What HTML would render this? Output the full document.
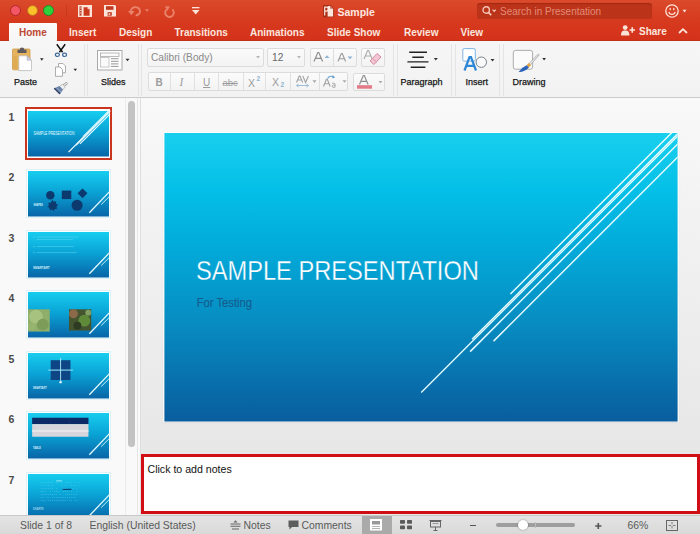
<!DOCTYPE html>
<html><head><meta charset="utf-8">
<style>
*{margin:0;padding:0;box-sizing:border-box}
html,body{width:700px;height:534px;overflow:hidden;background:#f4f4f4;font-family:"Liberation Sans",sans-serif;position:relative}
.a{position:absolute}
svg{position:absolute;overflow:visible}
#top{left:0;top:0;width:700px;height:41px;background:linear-gradient(#da4a2b,#d63a1f 50%,#d4321a)}
.tl{width:11px;height:11px;border-radius:50%;top:5px}
.tab{top:27px;font-size:10px;line-height:12px;color:#fbe6df;font-weight:bold;white-space:nowrap}
#home{left:9px;top:23px;width:48px;height:18px;background:linear-gradient(#fbfbfb,#f6f6f6);border-radius:1px 1px 0 0}
#ribbon{left:0;top:41px;width:700px;height:57px;background:linear-gradient(#f6f6f6,#f2f2f2)}
#rb{left:0;top:97px;width:700px;height:1px;background:#cbcbcb}
.sep{top:43.5px;height:52px;border-left:1px solid #e4e4e4;border-right:1px solid #e4e4e4}
.lbl{font-size:9px;line-height:10px;color:#151515;top:76.8px;white-space:nowrap;-webkit-text-stroke:0.25px #151515}
.box{background:linear-gradient(#fbfbfb,#f3f3f3);border:1px solid #dcdcdc;border-radius:2px}
#left{left:0;top:98px;width:141px;height:417px;background:#f9f9f9}
#main{left:141px;top:98px;width:559px;height:417px;background:linear-gradient(#f9f9f9 0%,#f3f3f3 25%,#ececec 60%,#e7e7e7 85%,#e9e9e6 100%)}
#status{left:0;top:515px;width:700px;height:19px;background:linear-gradient(#e4e4e4,#d9d9d9);border-top:1px solid #c8c8c8}
.st{top:4px;font-size:10.4px;line-height:11px;color:#5a5a5a;white-space:nowrap}
.num{left:8.5px;font-size:10.5px;line-height:12px;font-weight:bold;color:#4a4a4a}
.th{left:27px;width:83px;height:47px;border:1px solid #d6ebf3;background:#fff}
.th svg{left:0;top:0}
#slide{left:164px;top:132.5px;width:514px;height:288.5px;box-shadow:0 0 0 1px rgba(255,255,255,.7),0 1px 3px rgba(0,0,0,.08)}
#notes{left:141px;top:453.5px;width:559px;height:60.5px;background:#fff;border:3px solid #d10d16}
</style></head><body>
<div id="top" class="a">
  <div class="a" style="left:0;top:40px;width:700px;height:1px;background:#bf3419"></div>
  <div class="a tl" style="left:10px;top:5.2px;background:#f25763;border:1px solid #b3262a"></div>
  <div class="a tl" style="left:26.5px;top:5.2px;background:#f9c12a;border:1px solid #c0701d"></div>
  <div class="a tl" style="left:42.5px;top:5.2px;background:#2fd23a;border:1px solid #24862a"></div>
  <div class="a" style="left:66px;top:5px;width:1px;height:12px;background:#c8391c"></div>
  <!-- sidebar icon -->
  <svg style="left:77.5px;top:4.5px" width="14" height="12" viewBox="0 0 14 12">
    <rect x="0" y="0" width="14" height="12" fill="#fde4da"/>
    <rect x="1.5" y="1.3" width="2" height="9.4" fill="#b8402a"/>
    <path d="M1.8 3h1.4M1.8 5.5h1.4M1.8 8h1.4" stroke="#fde4da" stroke-width="0.8"/>
    <path d="M5.6 2.2h4l2 2v6.5h-6z" fill="#c9381c"/>
    <path d="M9.6 2.2v2h2z" fill="#fde4da"/>
  </svg>
  <!-- save icon -->
  <svg style="left:104px;top:5px" width="12" height="11.5" viewBox="0 0 12 11.5">
    <path d="M0 0h11l1 1v10.5h-12z" fill="#fde4da"/>
    <rect x="2" y="1.2" width="7.5" height="3.6" fill="#c0391f"/>
    <path d="M3.6 10.7v-3.5h4.2v3.5" fill="#c0391f"/>
    <rect x="4.6" y="8.3" width="1.6" height="1.6" fill="#fde4da"/>
  </svg>
  <!-- undo -->
  <svg style="left:128px;top:6px" width="24" height="10" viewBox="0 0 24 10">
    <path d="M3 6.5a4.6 4.2 0 1 1 4.6 3" fill="none" stroke="#e9826a" stroke-width="1.9"/>
    <path d="M0 5l3.3 4.2l3.2-4.2z" fill="#e9826a"/>
    <path d="M17 3.3h4l-2 2.5z" fill="#e9826a"/>
  </svg>
  <!-- redo -->
  <svg style="left:163.5px;top:5px" width="12" height="12" viewBox="0 0 12 12">
    <path d="M8.3 4.4a4.3 4.3 0 1 1 -5.7 0.1" fill="none" stroke="#e9826a" stroke-width="1.9"/>
    <path d="M0.8 1.2l5.2 0.4l-2.6 4.2z" fill="#e9826a"/>
  </svg>
  <!-- customize -->
  <svg style="left:191.5px;top:6.5px" width="8" height="8" viewBox="0 0 8 8">
    <rect x="0" y="0" width="7.5" height="1.3" fill="#fde4da"/>
    <path d="M0 3h7.5l-3.75 4.5z" fill="#fde4da"/>
  </svg>
  <!-- ppt doc icon -->
  <svg style="left:322.5px;top:4.5px" width="11" height="12.5" viewBox="0 0 11 12.5">
    <path d="M0 0H7.6L11 3.4V12.3H0Z" fill="#a82d17"/>
    <path d="M4.6 0.9H7.2L10.1 3.8V11.4H4.6Z" fill="#fde6dd"/>
    <path d="M7.2 0.9V3.8H10.1Z" fill="#c4664e"/>
    <path d="M1.7 10.6V2.1H3.4a2 2 0 0 1 0 4H1.7" fill="none" stroke="#fde6dd" stroke-width="1.2"/>
  </svg>
  <div class="a" style="left:337.5px;top:5.5px;font-size:10.5px;line-height:13px;color:#fde9e1;font-weight:bold">Sample</div>
  <div class="a" style="left:477px;top:3px;width:175px;height:15.5px;background:#bb3319;border-radius:3px;box-shadow:inset 0 1px 1px rgba(120,20,0,.35)"></div>
  <svg style="left:481.5px;top:6px" width="15" height="10" viewBox="0 0 15 10">
    <circle cx="4.2" cy="4" r="3.2" fill="none" stroke="#f6c4b6" stroke-width="1.4"/>
    <path d="M6.4 6.3l2.8 2.8" stroke="#f6c4b6" stroke-width="1.7"/>
    <path d="M10.6 3.6l1.6 1.8l1.6-1.8" fill="none" stroke="#f6c4b6" stroke-width="1.2"/>
  </svg>
  <div class="a" style="left:500px;top:6px;font-size:10px;line-height:12px;color:#e48b78">Search in Presentation</div>
  <!-- smiley -->
  <svg style="left:665px;top:4px" width="24" height="14" viewBox="0 0 24 14">
    <circle cx="7" cy="7" r="6.2" fill="none" stroke="#fde2d8" stroke-width="1.3"/>
    <rect x="4.6" y="4" width="1.2" height="2.2" fill="#fde2d8"/>
    <rect x="8.2" y="4" width="1.2" height="2.2" fill="#fde2d8"/>
    <path d="M3.8 7.8a3.3 3.3 0 0 0 6.4 0" fill="none" stroke="#fde2d8" stroke-width="1.2"/>
    <path d="M17.5 5.8h4l-2 2.6z" fill="#fde2d8"/>
  </svg>
  <!-- share -->
  <svg style="left:621px;top:25px" width="15" height="11" viewBox="0 0 15 11">
    <circle cx="4.2" cy="2.6" r="2.4" fill="#fde2d8"/>
    <path d="M0 10.5c0-4 1.5-5 4.2-5s4.2 1 4.2 5z" fill="#fde2d8"/>
    <path d="M8.5 5h5.5M11.25 2.2v5.6" stroke="#fde2d8" stroke-width="1.6"/>
  </svg>
  <svg style="left:677.5px;top:28px" width="10" height="6" viewBox="0 0 10 6">
    <path d="M1 5l4-3.8l4 3.8" fill="none" stroke="#fde2d8" stroke-width="1.8"/>
  </svg>
</div>
<div id="home" class="a"></div>
<div class="a tab" style="left:19px;color:#bd4833">Home</div>
<div class="a tab" style="left:69px">Insert</div>
<div class="a tab" style="left:119px">Design</div>
<div class="a tab" style="left:174.5px">Transitions</div>
<div class="a tab" style="left:250px">Animations</div>
<div class="a tab" style="left:327px">Slide Show</div>
<div class="a tab" style="left:404px">Review</div>
<div class="a tab" style="left:460.5px">View</div>
<div class="a tab" style="left:639px;top:26px">Share</div>

<div id="ribbon" class="a"></div>
<div id="rb" class="a"></div>
<div class="a sep" style="left:84px;width:4px"></div>
<div class="a sep" style="left:138px;width:4px"></div>
<div class="a sep" style="left:392.5px;width:5px"></div>
<div class="a sep" style="left:451px;width:4.5px"></div>
<div class="a sep" style="left:499px;width:5px"></div>

<!-- paste -->
<svg style="left:12px;top:46px" width="33" height="26" viewBox="0 0 33 26">
  <rect x="0.5" y="3" width="17.5" height="20.8" rx="1" fill="#e5b45c" stroke="#cf9c4c" stroke-width="0.8"/>
  <rect x="1.3" y="10" width="4" height="13" fill="#d9a54d" opacity=".6"/>
  <path d="M5.5 7v-3.2h2.2a2.3 2.3 0 0 1 4.6 0h2.2v3.2z" fill="#5e5a5e"/>
  <path d="M6.8 9.8h8.2l4.5 4.5v10.3h-12.7z" fill="#fff" stroke="#bdbdbd" stroke-width="0.8"/>
  <path d="M15 9.8v4.5h4.5z" fill="#c9cede" stroke="#aab" stroke-width="0.5"/>
  <path d="M28 12.3h3.6l-1.8 2.4z" fill="#2a2a2a"/>
</svg>
<div class="a lbl" style="left:14px">Paste</div>
<!-- scissors -->
<svg style="left:54px;top:44px" width="14" height="14" viewBox="0 0 14 14">
  <path d="M2.8 0.3L8.6 8.3M11.2 0.3L5.4 8.3" stroke="#111" stroke-width="1.5"/>
  <ellipse cx="3.4" cy="10.8" rx="2" ry="1.7" fill="none" stroke="#3f6a9a" stroke-width="1.2"/>
  <ellipse cx="10.6" cy="10.8" rx="2" ry="1.7" fill="none" stroke="#3f6a9a" stroke-width="1.2"/>
</svg>
<!-- copy -->
<svg style="left:55px;top:62.5px" width="24" height="14" viewBox="0 0 24 14">
  <path d="M3.5 0.5h4.5l2.5 2.5v6.8h-7z" fill="#fff" stroke="#9a9a9a" stroke-width="0.8"/>
  <path d="M0.5 4h4.5l2.5 2.5v6.8h-7z" fill="#fff" stroke="#9a9a9a" stroke-width="0.8"/>
  <path d="M18.5 5.8h3.6l-1.8 2.3z" fill="#2a2a2a"/>
</svg>
<!-- format painter -->
<svg style="left:54px;top:82px" width="14" height="12" viewBox="0 0 14 12">
  <path d="M9.8 3.6L12.3 1.4" stroke="#9a9a9a" stroke-width="2.6" stroke-linecap="round"/>
  <path d="M9.8 3.6L12.3 1.4" stroke="#f4f4f4" stroke-width="1.1" stroke-linecap="round"/>
  <path d="M5.6 4.3L8.3 2l3 3l-2.5 2.6z" fill="#f0f0f0" stroke="#a0a0a0" stroke-width="0.6"/>
  <path d="M0.2 6.3L5.4 4l3.6 3.8l-3 4.2z" fill="#6b83aa"/>
  <path d="M0.2 6.3L6 12" stroke="#2f3f5f" stroke-width="1.2"/>
  <path d="M2.5 5.5l4.5 4.5" stroke="#a9b9d3" stroke-width="0.7"/>
</svg>
<!-- slides icon -->
<svg style="left:97px;top:49.5px" width="34" height="21" viewBox="0 0 34 21">
  <rect x="0.5" y="0.5" width="24.5" height="19.5" fill="#fdfdfd" stroke="#a9a9a9" stroke-width="1"/>
  <rect x="3.5" y="3" width="18.5" height="3.5" fill="#fafafa" stroke="#aaa" stroke-width="0.8"/>
  <rect x="3.5" y="7.5" width="8.5" height="9.5" fill="#fafafa" stroke="#bbb" stroke-width="0.8"/>
  <path d="M14 8.7h7.5M14 11.3h7.5M14 13.9h7.5M14 16.4h7.5" stroke="#8d8d8d" stroke-width="0.9"/>
  <path d="M28.5 8.7h4l-2 2.6z" fill="#333"/>
</svg>
<div class="a lbl" style="left:101px">Slides</div>

<!-- font name -->
<div class="a box" style="left:147px;top:47.5px;width:116.5px;height:19px"></div>
<div class="a" style="left:151px;top:52px;font-size:10.2px;line-height:12px;color:#8a8a8a">Calibri (Body)</div>
<svg style="left:256px;top:56px" width="5" height="3" viewBox="0 0 5 3"><path d="M0 0h4l-2 2.5z" fill="#b5b5b5"/></svg>
<div class="a box" style="left:266.5px;top:48px;width:38.5px;height:18.5px"></div>
<div class="a" style="left:272px;top:52px;font-size:10.2px;line-height:12px;color:#666">12</div>
<svg style="left:297px;top:56px" width="5" height="3" viewBox="0 0 5 3"><path d="M0 0h4l-2 2.5z" fill="#b5b5b5"/></svg>
<div class="a box" style="left:309.5px;top:48px;width:47px;height:18.5px"></div>
<div class="a" style="left:333px;top:49px;width:1px;height:16.5px;background:#dedede"></div>
<svg style="left:313px;top:52px" width="42" height="10" viewBox="0 0 42 10">
  <path d="M1 9.5l3.8-9h1l3.8 9M2.6 6.3h5.6" fill="none" stroke="#8f8f8f" stroke-width="1.2"/>
  <path d="M11.5 6h5l-2.5-2.8z" fill="#8fb4d2"/>
  <path d="M25 9.5l3.3-8h1l3.3 8M26.4 6.7h4.8" fill="none" stroke="#9a9a9a" stroke-width="1.1"/>
  <path d="M34.5 4.5h5l-2.5 2.8z" fill="#8fb4d2"/>
</svg>
<div class="a box" style="left:360.5px;top:48px;width:24px;height:18.5px"></div>
<svg style="left:363px;top:50px" width="20" height="15" viewBox="0 0 20 15">
  <path d="M1 9l3.6-8.5h1l3.6 8.5M2.5 6h5.4" fill="none" stroke="#aaa" stroke-width="1.1"/>
  <path d="M7 11l7-7.5l4 3.5l-7 7.5z" fill="#f2c6d2" stroke="#d98aa3" stroke-width="1"/>
  <path d="M9.5 8.5l4 3.5" stroke="#d98aa3" stroke-width="0.8"/>
</svg>

<!-- row 2 -->
<div class="a box" style="left:147.5px;top:72px;width:200.5px;height:19px"></div>
<div class="a" style="left:170.3px;top:73px;width:1px;height:17px;background:#e0e0e0"></div>
<div class="a" style="left:194.3px;top:73px;width:1px;height:17px;background:#e0e0e0"></div>
<div class="a" style="left:218.2px;top:73px;width:1px;height:17px;background:#e0e0e0"></div>
<div class="a" style="left:242.6px;top:73px;width:1px;height:17px;background:#e0e0e0"></div>
<div class="a" style="left:265.1px;top:73px;width:1px;height:17px;background:#e0e0e0"></div>
<div class="a" style="left:289.5px;top:73px;width:1px;height:17px;background:#e0e0e0"></div>
<div class="a" style="left:319.3px;top:73px;width:1px;height:17px;background:#e0e0e0"></div>
<div class="a" style="left:155.5px;top:76.5px;font-size:10px;line-height:11px;font-weight:bold;color:#9c9c9c">B</div>
<div class="a" style="left:179.5px;top:75.5px;font-size:11.5px;line-height:12px;font-style:italic;color:#a0a0a0;font-family:'Liberation Serif',serif">I</div>
<div class="a" style="left:203px;top:76.5px;font-size:10px;line-height:11px;color:#9c9c9c;text-decoration:underline">U</div>
<div class="a" style="left:222.5px;top:77px;font-size:9.5px;line-height:11px;color:#9c9c9c;text-decoration:line-through">abc</div>
<div class="a" style="left:248px;top:78px;font-size:10.5px;line-height:11px;color:#9c9c9c">X</div>
<div class="a" style="left:256.5px;top:75px;font-size:6.5px;line-height:7px;color:#8fb4d2;font-weight:bold">2</div>
<div class="a" style="left:272px;top:76.5px;font-size:10.5px;line-height:11px;color:#9c9c9c">X</div>
<div class="a" style="left:280.5px;top:80.5px;font-size:6.5px;line-height:7px;color:#8fb4d2;font-weight:bold">2</div>
<svg style="left:296px;top:75px" width="25" height="15" viewBox="0 0 25 15">
  <path d="M0.5 7.5l2.7-6.5h.8l2.7 6.5M1.5 5h4.5" fill="none" stroke="#a4a4a4" stroke-width="1.1"/>
  <path d="M6.8 1l2.8 6.5l2.8-6.5" fill="none" stroke="#a4a4a4" stroke-width="1.1"/>
  <path d="M0.5 10.5h12M0.5 10.5l2-1.5M0.5 10.5l2 1.5M12.5 10.5l-2-1.5M12.5 10.5l-2 1.5" stroke="#94b6d2" stroke-width="0.9" fill="none"/>
  <path d="M16.5 5.3h4l-2 2.6z" fill="#aaa"/>
</svg>
<svg style="left:323px;top:74px" width="25" height="16" viewBox="0 0 25 16">
  <path d="M0.5 12.5l2.9-7.3h.9l2.9 7.3M1.6 9.8h4.9" fill="none" stroke="#a0a0a0" stroke-width="1.1"/>
  <path d="M9 9.3h1.8a1.3 1.3 0 0 1 1.3 1.3v2.2M12.1 11.2h-1.7a1.1 1.1 0 1 0 0 2.2h1.7" fill="none" stroke="#a0a0a0" stroke-width="0.9"/>
  <path d="M4.5 4.5c1.5-2.6 4.5-3 6.3-1.2" fill="none" stroke="#6a9fce" stroke-width="1.1"/>
  <path d="M9.8 1l2.3 2.6l-2.9 0.8z" fill="#6a9fce"/>
  <path d="M19.5 6.2h4l-2 2.6z" fill="#aaa"/>
</svg>
<div class="a box" style="left:352.5px;top:72.5px;width:32px;height:18.5px"></div>
<svg style="left:356px;top:75px" width="28" height="15" viewBox="0 0 28 15">
  <path d="M3.5 9.5l3.8-9h1l3.8 9M5.1 6.3h5.6" fill="none" stroke="#8f8f8f" stroke-width="1.2"/>
  <rect x="1" y="10.2" width="15" height="3.5" fill="#e27a87"/>
  <path d="M22.5 6h4l-2 2.6z" fill="#aaa"/>
</svg>

<!-- paragraph -->
<svg style="left:405px;top:50px" width="36" height="19" viewBox="0 0 36 19">
  <path d="M4.2 2.2h17.8M7.3 7.2h11.5M2.4 11.9h21.1M5.7 17.2h14.7" stroke="#222" stroke-width="1.4"/>
  <path d="M28.8 8h4l-2 2.6z" fill="#333"/>
</svg>
<div class="a lbl" style="left:400.5px">Paragraph</div>
<!-- insert -->
<svg style="left:461.5px;top:48px" width="34" height="24" viewBox="0 0 34 24">
  <rect x="0.8" y="0.6" width="12.5" height="12.5" rx="1.5" fill="#fff" stroke="#7fb4e3" stroke-width="1"/>
  <circle cx="19.3" cy="14.2" r="5.2" fill="#fafafa" stroke="#6b7480" stroke-width="0.9"/>
  <path d="M2.5 22.5l5-13.5h1.5l5 13.5M4.3 17.8h8" fill="none" stroke="#2e86d6" stroke-width="2.2"/>
  <path d="M28.5 11h4l-2 2.6z" fill="#333"/>
</svg>
<div class="a lbl" style="left:465.5px">Insert</div>
<!-- drawing -->
<svg style="left:512px;top:50px" width="36" height="23" viewBox="0 0 36 23">
  <rect x="1.3" y="0.4" width="19.3" height="18.8" rx="2.3" fill="#fbfbfb" stroke="#a3a3a3" stroke-width="0.9"/>
  <path d="M26.36 3.99L27.24 4.81L18.54 14.88L17.06 13.52Z" fill="#ececec" stroke="#8a8a8a" stroke-width="0.6" stroke-linejoin="round"/>
  <path d="M18.98 15.28L16.62 13.12L14.59 15.33L16.95 17.49Z" fill="#e6a23e"/>
  <path d="M16.95 17.49L14.59 15.33Q10.5 17 6.6 21.9Q12.3 22.3 16.95 17.49Z" fill="#2b63b9"/>
  <path d="M30.3 8h3.6l-1.8 2.5z" fill="#2a2a2a"/>
</svg>
<div class="a lbl" style="left:512.5px">Drawing</div>

<div id="left" class="a"></div>
<div class="a" style="left:124.5px;top:98px;width:1px;height:417px;background:#ececec"></div>
<div class="a" style="left:127.5px;top:101px;width:7px;height:346px;border-radius:3.5px;background:#c3c3c3"></div>
<div class="a" style="left:136.5px;top:98px;width:1px;height:417px;background:#e6e6e6"></div>
<div class="a" style="left:140px;top:98px;width:1px;height:417px;background:#dedede"></div>
<div id="main" class="a"></div>

<!-- thumbnails -->
<svg width="0" height="0" style="position:absolute">
  <defs>
    <linearGradient id="tg" x1="0" y1="0" x2="0" y2="1">
      <stop offset="0" stop-color="#17cdef"/>
      <stop offset=".45" stop-color="#0aa4d6"/>
      <stop offset="1" stop-color="#0865a7"/>
    </linearGradient>
    <g id="tl1" stroke="#f4fdff" fill="none">
      <path d="M41 41.6L83 -0.4" stroke-width="1.2"/>
      <path d="M48.6 35L83 0.6" stroke-width="1"/>
      <path d="M49.6 33L83 -0.4" stroke-width="1"/>
      <path d="M52.6 33.3L83 2.9" stroke-width="1.1"/>
      <path d="M55.3 25.7L83 -2" stroke-width="0.8" opacity=".85"/>
    </g>
    <g id="tl" stroke="#e4faff" fill="none">
      <path d="M62.1 42.2L83 20.4" stroke-width="1.3"/>
      <path d="M74.1 33.9L83 25.1" stroke-width="0.9"/>
    </g>
  </defs>
</svg>
<div class="a num" style="top:110.8px">1</div>
<div class="a" style="left:25px;top:107px;width:87px;height:53px;border:2.8px solid #ca3520;background:#fff"></div>
<svg style="left:28px;top:110.5px" width="81" height="45.5" viewBox="0 0 82 46" preserveAspectRatio="none">
  <rect width="82" height="46" fill="url(#tg)"/>
  <use href="#tl1"/>
  <text x="5.5" y="24.2" font-size="5" fill="#f0fbff" font-family="Liberation Sans" textLength="41.5" lengthAdjust="spacingAndGlyphs">SAMPLE PRESENTATION</text>
</svg>
<div class="a num" style="top:171.3px">2</div>
<div class="a" style="left:26px;top:169.2px;width:85px;height:49px;border:1.5px solid #ddf1f8;background:#fff"></div>
<svg style="left:28px;top:171px" width="81" height="45.5" viewBox="0 0 82 46" preserveAspectRatio="none">
  <rect width="82" height="46" fill="url(#tg)"/>
  <use href="#tl"/>
  <g fill="#0d3a6e">
    <circle cx="22.6" cy="24.4" r="4.3"/>
    <rect x="34.2" y="19.8" width="9.6" height="8.6"/>
    <path d="M55.2 17.6l5 5l-5 5l-5-5z"/>
    <path d="M24.7 29l1.3 2.2l2.4-0.6l0 2.4l2.2 1.2l-1.8 1.7l0.8 2.3l-2.5 0.2l-1 2.3l-1.7-1.8l-2.4 0.8l-0.2-2.5l-2.3-1l1.8-1.7l-0.8-2.3l2.5-0.2z"/>
    <circle cx="49.7" cy="34.6" r="5.6"/>
  </g>
  <text x="5.5" y="35.5" font-size="3" font-weight="bold" fill="#d8f4ff" font-family="Liberation Sans" textLength="9.5" lengthAdjust="spacingAndGlyphs">SHAPES</text>
</svg>
<div class="a num" style="top:231.8px">3</div>
<div class="a" style="left:26px;top:229.7px;width:85px;height:49px;border:1.5px solid #ddf1f8;background:#fff"></div>
<svg style="left:28px;top:231.5px" width="81" height="45.5" viewBox="0 0 82 46" preserveAspectRatio="none">
  <rect width="82" height="46" fill="url(#tg)"/>
  <use href="#tl"/>
  <g fill="#5fd6f2" opacity=".5">
    <path d="M6 4l1.1 1.1l-1.1 1.1l-1.1-1.1z"/><rect x="8.5" y="4.5" width="43" height="1"/><rect x="8.5" y="7" width="37" height="1"/>
    <path d="M6 13.7l1.1 1.1l-1.1 1.1l-1.1-1.1z"/><rect x="8.5" y="14.2" width="38" height="1"/>
    <path d="M6 19.8l1.1 1.1l-1.1 1.1l-1.1-1.1z"/><rect x="8.5" y="20.3" width="41" height="1"/>
  </g>
  <text x="5" y="37.2" font-size="3.6" font-weight="bold" fill="#c8ecfb" font-family="Liberation Sans" textLength="17" lengthAdjust="spacingAndGlyphs">SMARTART</text>
</svg>
<div class="a num" style="top:292.3px">4</div>
<div class="a" style="left:26px;top:290.2px;width:85px;height:49px;border:1.5px solid #ddf1f8;background:#fff"></div>
<svg style="left:28px;top:292px" width="81" height="45.5" viewBox="0 0 82 46" preserveAspectRatio="none">
  <rect width="82" height="46" fill="url(#tg)"/>
  <use href="#tl"/>
  <rect x="0" y="17.5" width="22" height="22.5" fill="#8fae6a"/>
  <circle cx="8" cy="25" r="7" fill="#a7c27e"/>
  <circle cx="15" cy="33" r="6" fill="#7d9c5a"/>
  <circle cx="4" cy="35" r="4" fill="#97b46f"/>
  <rect x="41.5" y="17.5" width="22.5" height="21.5" fill="#44542f"/>
  <circle cx="46" cy="22" r="4.5" fill="#8a6a48"/>
  <circle cx="57" cy="29" r="6" fill="#5f8a3a"/>
  <circle cx="50" cy="34" r="4" fill="#2f3a22"/>
  <circle cx="61" cy="21" r="3" fill="#7fa060"/>
</svg>
<div class="a num" style="top:352.8px">5</div>
<div class="a" style="left:26px;top:350.7px;width:85px;height:49px;border:1.5px solid #ddf1f8;background:#fff"></div>
<svg style="left:28px;top:352.5px" width="81" height="45.5" viewBox="0 0 82 46" preserveAspectRatio="none">
  <rect width="82" height="46" fill="url(#tg)"/>
  <use href="#tl"/>
  <g fill="#0e4585">
    <rect x="23" y="7.3" width="9.6" height="9.6"/><rect x="33.4" y="7.3" width="9.6" height="9.6"/>
    <rect x="23" y="17.7" width="9.6" height="9.6"/><rect x="33.4" y="17.7" width="9.6" height="9.6"/>
  </g>
  <path d="M33 5v25M20.5 17.3h25" stroke="#d8f4ff" stroke-width="0.7"/>
  <circle cx="33" cy="29.5" r="1.2" fill="#e8f8ff"/>
  <text x="5" y="36.8" font-size="3.2" font-weight="bold" fill="#cfeefb" font-family="Liberation Sans" textLength="14" lengthAdjust="spacingAndGlyphs">SMARTART</text>
</svg>
<div class="a num" style="top:413.3px">6</div>
<div class="a" style="left:26px;top:411.2px;width:85px;height:49px;border:1.5px solid #ddf1f8;background:#fff"></div>
<svg style="left:28px;top:413px" width="81" height="45.5" viewBox="0 0 82 46" preserveAspectRatio="none">
  <rect width="82" height="46" fill="url(#tg)"/>
  <use href="#tl"/>
  <rect x="4.2" y="4.8" width="57" height="6.4" fill="#0b2a66"/>
  <path d="M23.2 4.8v6.4M42.2 4.8v6.4" stroke="#1d3f80" stroke-width="0.4"/>
  <rect x="4.2" y="11.2" width="57" height="12.8" fill="#d6d6dc"/>
  <rect x="4.2" y="17" width="57" height="2.2" fill="#e6e6ea"/>
  <text x="5" y="36" font-size="3" font-weight="bold" fill="#cfeefb" font-family="Liberation Sans" textLength="8" lengthAdjust="spacingAndGlyphs">TABLE</text>
</svg>
<div class="a num" style="top:473.8px">7</div>
<div class="a" style="left:26px;top:471.7px;width:85px;height:49px;border:1.5px solid #ddf1f8;background:#fff"></div>
<svg style="left:28px;top:473.5px" width="81" height="45.5" viewBox="0 0 82 46" preserveAspectRatio="none">
  <rect width="82" height="46" fill="url(#tg)"/>
  <use href="#tl"/>
  <g fill="#9fe8fa" opacity=".45"><rect x="13.0" y="8.5" width="0.9" height="0.7"/><rect x="14.9" y="8.5" width="0.9" height="0.7"/><rect x="16.8" y="8.5" width="0.9" height="0.7"/><rect x="18.7" y="8.5" width="0.9" height="0.7"/><rect x="20.6" y="8.5" width="0.9" height="0.7"/><rect x="22.5" y="8.5" width="0.9" height="0.7"/><rect x="24.4" y="8.5" width="0.9" height="0.7"/><rect x="28.2" y="8.5" width="0.9" height="0.7"/><rect x="30.1" y="8.5" width="0.9" height="0.7"/><rect x="33.9" y="8.5" width="0.9" height="0.7"/><rect x="37.7" y="8.5" width="0.9" height="0.7"/><rect x="39.6" y="8.5" width="0.9" height="0.7"/><rect x="41.5" y="8.5" width="0.9" height="0.7"/><rect x="43.4" y="8.5" width="0.9" height="0.7"/><rect x="47.2" y="8.5" width="0.9" height="0.7"/><rect x="51.0" y="8.5" width="0.9" height="0.7"/><rect x="13.0" y="11.5" width="0.9" height="0.7"/><rect x="16.8" y="11.5" width="0.9" height="0.7"/><rect x="18.7" y="11.5" width="0.9" height="0.7"/><rect x="20.6" y="11.5" width="0.9" height="0.7"/><rect x="24.4" y="11.5" width="0.9" height="0.7"/><rect x="33.9" y="11.5" width="0.9" height="0.7"/><rect x="37.7" y="11.5" width="0.9" height="0.7"/><rect x="43.4" y="11.5" width="0.9" height="0.7"/><rect x="45.3" y="11.5" width="0.9" height="0.7"/><rect x="47.2" y="11.5" width="0.9" height="0.7"/><rect x="51.0" y="11.5" width="0.9" height="0.7"/><rect x="13.0" y="14.5" width="0.9" height="0.7"/><rect x="14.9" y="14.5" width="0.9" height="0.7"/><rect x="16.8" y="14.5" width="0.9" height="0.7"/><rect x="18.7" y="14.5" width="0.9" height="0.7"/><rect x="20.6" y="14.5" width="0.9" height="0.7"/><rect x="22.5" y="14.5" width="0.9" height="0.7"/><rect x="24.4" y="14.5" width="0.9" height="0.7"/><rect x="28.2" y="14.5" width="0.9" height="0.7"/><rect x="35.8" y="14.5" width="0.9" height="0.7"/><rect x="37.7" y="14.5" width="0.9" height="0.7"/><rect x="45.3" y="14.5" width="0.9" height="0.7"/><rect x="49.1" y="14.5" width="0.9" height="0.7"/><rect x="13.0" y="17.5" width="0.9" height="0.7"/><rect x="14.9" y="17.5" width="0.9" height="0.7"/><rect x="16.8" y="17.5" width="0.9" height="0.7"/><rect x="22.5" y="17.5" width="0.9" height="0.7"/><rect x="26.3" y="17.5" width="0.9" height="0.7"/><rect x="28.2" y="17.5" width="0.9" height="0.7"/><rect x="30.1" y="17.5" width="0.9" height="0.7"/><rect x="35.8" y="17.5" width="0.9" height="0.7"/><rect x="37.7" y="17.5" width="0.9" height="0.7"/><rect x="39.6" y="17.5" width="0.9" height="0.7"/><rect x="43.4" y="17.5" width="0.9" height="0.7"/><rect x="49.1" y="17.5" width="0.9" height="0.7"/><rect x="13.0" y="20.5" width="0.9" height="0.7"/><rect x="14.9" y="20.5" width="0.9" height="0.7"/><rect x="16.8" y="20.5" width="0.9" height="0.7"/><rect x="18.7" y="20.5" width="0.9" height="0.7"/><rect x="20.6" y="20.5" width="0.9" height="0.7"/><rect x="22.5" y="20.5" width="0.9" height="0.7"/><rect x="24.4" y="20.5" width="0.9" height="0.7"/><rect x="26.3" y="20.5" width="0.9" height="0.7"/><rect x="28.2" y="20.5" width="0.9" height="0.7"/><rect x="32.0" y="20.5" width="0.9" height="0.7"/><rect x="37.7" y="20.5" width="0.9" height="0.7"/><rect x="39.6" y="20.5" width="0.9" height="0.7"/><rect x="41.5" y="20.5" width="0.9" height="0.7"/><rect x="43.4" y="20.5" width="0.9" height="0.7"/><rect x="45.3" y="20.5" width="0.9" height="0.7"/><rect x="47.2" y="20.5" width="0.9" height="0.7"/><rect x="49.1" y="20.5" width="0.9" height="0.7"/><rect x="13.0" y="23.5" width="0.9" height="0.7"/><rect x="14.9" y="23.5" width="0.9" height="0.7"/><rect x="18.7" y="23.5" width="0.9" height="0.7"/><rect x="20.6" y="23.5" width="0.9" height="0.7"/><rect x="24.4" y="23.5" width="0.9" height="0.7"/><rect x="26.3" y="23.5" width="0.9" height="0.7"/><rect x="28.2" y="23.5" width="0.9" height="0.7"/><rect x="30.1" y="23.5" width="0.9" height="0.7"/><rect x="32.0" y="23.5" width="0.9" height="0.7"/><rect x="33.9" y="23.5" width="0.9" height="0.7"/><rect x="35.8" y="23.5" width="0.9" height="0.7"/><rect x="37.7" y="23.5" width="0.9" height="0.7"/><rect x="39.6" y="23.5" width="0.9" height="0.7"/><rect x="41.5" y="23.5" width="0.9" height="0.7"/><rect x="43.4" y="23.5" width="0.9" height="0.7"/><rect x="45.3" y="23.5" width="0.9" height="0.7"/><rect x="47.2" y="23.5" width="0.9" height="0.7"/><rect x="13.0" y="26.5" width="0.9" height="0.7"/><rect x="14.9" y="26.5" width="0.9" height="0.7"/><rect x="16.8" y="26.5" width="0.9" height="0.7"/><rect x="20.6" y="26.5" width="0.9" height="0.7"/><rect x="22.5" y="26.5" width="0.9" height="0.7"/><rect x="24.4" y="26.5" width="0.9" height="0.7"/><rect x="26.3" y="26.5" width="0.9" height="0.7"/><rect x="28.2" y="26.5" width="0.9" height="0.7"/><rect x="30.1" y="26.5" width="0.9" height="0.7"/><rect x="32.0" y="26.5" width="0.9" height="0.7"/><rect x="33.9" y="26.5" width="0.9" height="0.7"/><rect x="35.8" y="26.5" width="0.9" height="0.7"/><rect x="37.7" y="26.5" width="0.9" height="0.7"/><rect x="41.5" y="26.5" width="0.9" height="0.7"/><rect x="43.4" y="26.5" width="0.9" height="0.7"/><rect x="47.2" y="26.5" width="0.9" height="0.7"/><rect x="49.1" y="26.5" width="0.9" height="0.7"/></g>
  <rect x="28.5" y="6.5" width="6" height="0.9" fill="#c8f2fc" opacity=".8"/>
  <rect x="35" y="15" width="9" height="1.1" fill="#0d3e72"/>
  <text x="4.8" y="36.3" font-size="3" font-weight="bold" fill="#cfeefb" opacity=".75" font-family="Liberation Sans" textLength="11" lengthAdjust="spacingAndGlyphs">CHARTS</text>
</svg>

<!-- main slide -->
<svg id="slide" width="514" height="289" viewBox="0 0 514 289">
  <defs>
    <linearGradient id="sg" x1="0" y1="0" x2="0" y2="1">
      <stop offset="0" stop-color="#18cfee"/>
      <stop offset=".2" stop-color="#04bfe7"/>
      <stop offset=".4" stop-color="#02aad9"/>
      <stop offset=".65" stop-color="#078dc2"/>
      <stop offset="1" stop-color="#095d9e"/>
    </linearGradient>
    <linearGradient id="sg2" gradientUnits="userSpaceOnUse" x1="0" y1="0" x2="0" y2="289">
      <stop offset="0" stop-color="#18cfee"/>
      <stop offset=".2" stop-color="#04bfe7"/>
      <stop offset=".4" stop-color="#02aad9"/>
      <stop offset=".65" stop-color="#078dc2"/>
      <stop offset="1" stop-color="#095d9e"/>
    </linearGradient>
    <clipPath id="sc"><rect width="514" height="289"/></clipPath>
  </defs>
  <rect width="514" height="289" fill="url(#sg)"/>
  <g clip-path="url(#sc)" stroke="#e6fbff" fill="none">
    <path d="M346.6 161.3L520 -12.1" stroke-width="1.5"/>
    <path d="M308.2 206.7L520 -5.1" stroke-width="1.5"/>
    <path d="M257.2 260L520 -2.8" stroke-width="1.3"/>
    <path d="M306.2 219L520 5.2" stroke-width="1.5"/>
    <path d="M329.7 208.5L520 18.2" stroke-width="1.5"/>
  </g>
  <text x="31.5" y="147.4" font-size="28.5" fill="#fff" stroke="url(#sg2)" stroke-width="0.3" font-family="Liberation Sans" textLength="283.5" lengthAdjust="spacingAndGlyphs">SAMPLE PRESENTATION</text>
  <text x="32.3" y="174.4" font-size="12.6" fill="#155c8d" stroke="#155c8d" stroke-width="0.15" font-family="Liberation Sans" textLength="55.5" lengthAdjust="spacingAndGlyphs">For Testing</text>
</svg>

<div id="notes" class="a"></div>
<div class="a" style="left:147.5px;top:463px;font-size:10.6px;line-height:12px;color:#111">Click to add notes</div>

<div id="status" class="a">
  <div class="a st" style="left:20px">Slide 1 of 8</div>
  <div class="a st" style="left:89.5px">English (United States)</div>
  <svg style="left:229.5px;top:3.5px" width="11" height="10" viewBox="0 0 11 10">
    <path d="M3.5 2.5l2-2.2l2 2.2z" fill="#666"/>
    <path d="M0.5 4h10M0.5 6.2h10M2 9h7" stroke="#666" stroke-width="1.1"/>
  </svg>
  <div class="a st" style="left:243.5px">Notes</div>
  <svg style="left:287.5px;top:4px" width="11" height="10" viewBox="0 0 11 10">
    <path d="M0.5 0.5h10v6.5h-6.5l-2.5 2.5v-2.5h-1z" fill="#5d5d5d"/>
  </svg>
  <div class="a st" style="left:301.5px">Comments</div>
  <div class="a" style="left:361.5px;top:0;width:30px;height:19px;background:#aaaaaa"></div>
  <svg style="left:370px;top:2.5px" width="13" height="12" viewBox="0 0 13 12">
    <rect x="0" y="0" width="12" height="11.5" fill="#fff"/>
    <rect x="2" y="2" width="8" height="3.5" fill="#999"/>
    <path d="M2 7.5h8M2 9.5h8" stroke="#aaa" stroke-width="0.9"/>
  </svg>
  <svg style="left:400px;top:4px" width="13" height="10" viewBox="0 0 13 10">
    <rect x="0" y="0" width="5" height="3.8" rx="0.8" fill="#5a5a5a"/><rect x="7" y="0" width="5" height="3.8" rx="0.8" fill="#5a5a5a"/>
    <rect x="0" y="5.5" width="5" height="3.8" rx="0.8" fill="#5a5a5a"/><rect x="7" y="5.5" width="5" height="3.8" rx="0.8" fill="#5a5a5a"/>
  </svg>
  <svg style="left:429px;top:4px" width="13" height="11" viewBox="0 0 13 11">
    <path d="M0.5 0.5h12" stroke="#666" stroke-width="1"/>
    <rect x="1.5" y="1.5" width="10" height="5.5" fill="none" stroke="#666" stroke-width="1"/>
    <path d="M3.5 3.5h6" stroke="#888" stroke-width="0.8"/>
    <path d="M6.5 7v3M4.5 10.5h4" stroke="#666" stroke-width="1"/>
  </svg>
  <div class="a" style="left:470px;top:8.5px;width:6px;height:1.6px;background:#555"></div>
  <div class="a" style="left:496px;top:7px;width:79px;height:4px;border-radius:2px;background:#9e9e9e"></div>
  <div class="a" style="left:534.5px;top:6px;width:1px;height:6px;background:#bbb"></div>
  <div class="a" style="left:518px;top:4px;width:9.5px;height:9.5px;border-radius:50%;background:#fff;box-shadow:0 0 1.5px rgba(0,0,0,.5)"></div>
  <svg style="left:595px;top:6.5px" width="7" height="6" viewBox="0 0 7 6"><path d="M3.3 0v6M0.2 3h6.2" stroke="#555" stroke-width="1.6"/></svg>
  <div class="a st" style="left:627.5px">66%</div>
  <svg style="left:665.5px;top:3.5px" width="12" height="11" viewBox="0 0 12 11">
    <rect x="0.5" y="0.5" width="11" height="10" fill="none" stroke="#666" stroke-width="1"/>
    <path d="M6 2v2.5M6 8.5v-2.5M2.5 5.5h2.5M9.5 5.5h-2.5" stroke="#666" stroke-width="0.8"/>
  </svg>
</div>
</body></html>
